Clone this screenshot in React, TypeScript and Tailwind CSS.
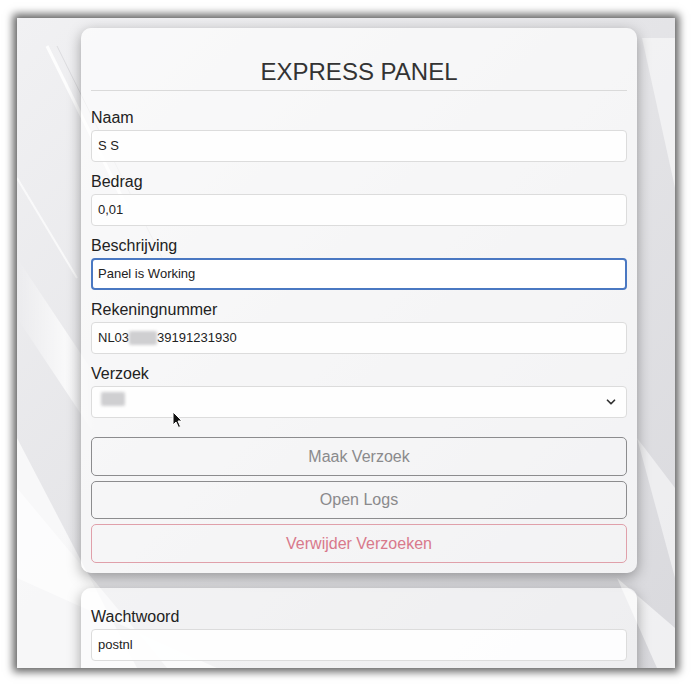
import { ChevronDown } from 'lucide-react';

const Field = ({ label, children }: { label: string; children: React.ReactNode }) => (
  <div className="mt-[10px] flex flex-col">
    <label className="mb-[2px] text-[16px] leading-[20px] text-[#222]">{label}</label>
    {children}
  </div>
);

const inputCls =
  "h-[32px] w-full rounded-[4px] border border-[#dcdcdc] bg-white/90 px-[6px] text-[13px] text-[#222] flex items-center";

// diagonal light streaks behind the cards
const Backdrop = () => (
  <svg className="absolute inset-0 h-full w-full" viewBox="0 0 658 650" preserveAspectRatio="none">
    <defs>
      <linearGradient id="bg" x1="0" y1="0" x2="1" y2="1">
        <stop offset="0" stopColor="#f1f1f3" />
        <stop offset="0.5" stopColor="#e4e4e7" />
        <stop offset="1" stopColor="#d9d9dd" />
      </linearGradient>
      <linearGradient id="streak" x1="0" y1="0" x2="1" y2="0">
        <stop offset="0" stopColor="#ffffff" stopOpacity="0" />
        <stop offset="0.6" stopColor="#ffffff" stopOpacity="0.9" />
        <stop offset="1" stopColor="#ffffff" stopOpacity="0" />
      </linearGradient>
    </defs>
    <rect width="658" height="650" fill="url(#bg)" />
    <polygon points="0,420 0,650 120,650" fill="#ffffff" opacity="0.7" />
    <polygon points="0,470 0,560 200,650 150,650" fill="#ffffff" opacity="0.6" />
    <line x1="30" y1="28" x2="110" y2="190" stroke="#ffffff" strokeWidth="3" opacity="0.9" />
    <line x1="40" y1="28" x2="150" y2="250" stroke="#c8c8cc" strokeWidth="1" opacity="0.5" />
    <polygon points="0,240 0,300 80,420 80,360" fill="url(#streak)" opacity="0.8" />
    <polygon points="625,20 658,20 658,170" fill="#ffffff" opacity="0.5" />
    <polygon points="620,420 658,470 658,560" fill="#ffffff" opacity="0.5" />
    <polygon points="600,560 658,610 658,650 640,650" fill="#ffffff" opacity="0.6" />
    <line x1="0" y1="160" x2="60" y2="260" stroke="#ffffff" strokeWidth="2" opacity="0.7" />
  </svg>
);

const Blur = ({ w }: { w: number }) => (
  <span
    className="inline-block h-[14px] rounded-[2px] bg-[#cfcfd1] blur-[1.5px]"
    style={{ width: w }}
  />
);

export default function App() {
  return (
    <div className="h-[686px] w-[692px] overflow-hidden bg-white pl-[17px] pt-[18px] font-['Liberation_Sans',Arial,sans-serif]">
      <div className="relative h-[650px] w-[658px] overflow-hidden shadow-[0_0_8px_4px_rgba(0,0,0,0.6)]">
        <Backdrop />

        <div className="relative ml-[64px] mt-[10px] w-[556px] rounded-[10px] bg-white/65 px-[10px] pb-[10px] pt-[28px] shadow-[0_4px_14px_rgba(0,0,0,0.35)]">
          <h1 className="text-center text-[24px] leading-[32px] text-[#333]">EXPRESS PANEL</h1>
          <div className="mt-[2px] border-b border-[#dadada]" />
          <div className="h-[7px]" />

          <Field label="Naam">
            <div className={inputCls}>S S</div>
          </Field>
          <Field label="Bedrag">
            <div className={inputCls}>0,01</div>
          </Field>
          <Field label="Beschrijving">
            <div className="flex h-[32px] w-full items-center rounded-[4px] border-2 border-[#4a78c2] bg-white px-[5px] text-[13px] text-[#222]">
              Panel is Working
            </div>
          </Field>
          <Field label="Rekeningnummer">
            <div className={inputCls}>
              NL03
              <Blur w={28} />
              39191231930
            </div>
          </Field>
          <Field label="Verzoek">
            <div className={`${inputCls} relative justify-between`}>
              <span className="ml-[3px]">
                <Blur w={24} />
              </span>
              <ChevronDown className="mr-[2px] h-[14px] w-[14px] text-[#333]" strokeWidth={3} />
              <svg className="absolute left-[80px] top-[24px] h-[18px] w-[12px]" viewBox="0 0 12 18">
                <path d="M1 1 L1 14 L4 11 L6.5 16.5 L8.5 15.5 L6 10 L10 10 Z" fill="#111" stroke="#fff" strokeWidth="1" />
              </svg>
            </div>
          </Field>

          <div className="mt-[19px] flex flex-col gap-[5px]">
            <button className="h-[39px] w-full rounded-[5px] border border-[#8c8c8e] text-[16px] text-[#8a8a8c]">
              Maak Verzoek
            </button>
            <button className="h-[38px] w-full rounded-[5px] border border-[#8c8c8e] text-[16px] text-[#8a8a8c]">
              Open Logs
            </button>
            <button className="h-[39px] w-full rounded-[5px] border border-[#e0a0aa] text-[16px] text-[#d9798b]">
              Verwijder Verzoeken
            </button>
          </div>
        </div>

        <div className="relative ml-[64px] mt-[15px] w-[556px] rounded-[10px] bg-white/55 px-[10px] pb-[30px] pt-[9px] shadow-[0_4px_14px_rgba(0,0,0,0.35)]">
          <Field label="Wachtwoord">
            <div className={inputCls}>postnl</div>
          </Field>
        </div>
      </div>
    </div>
  );
}
